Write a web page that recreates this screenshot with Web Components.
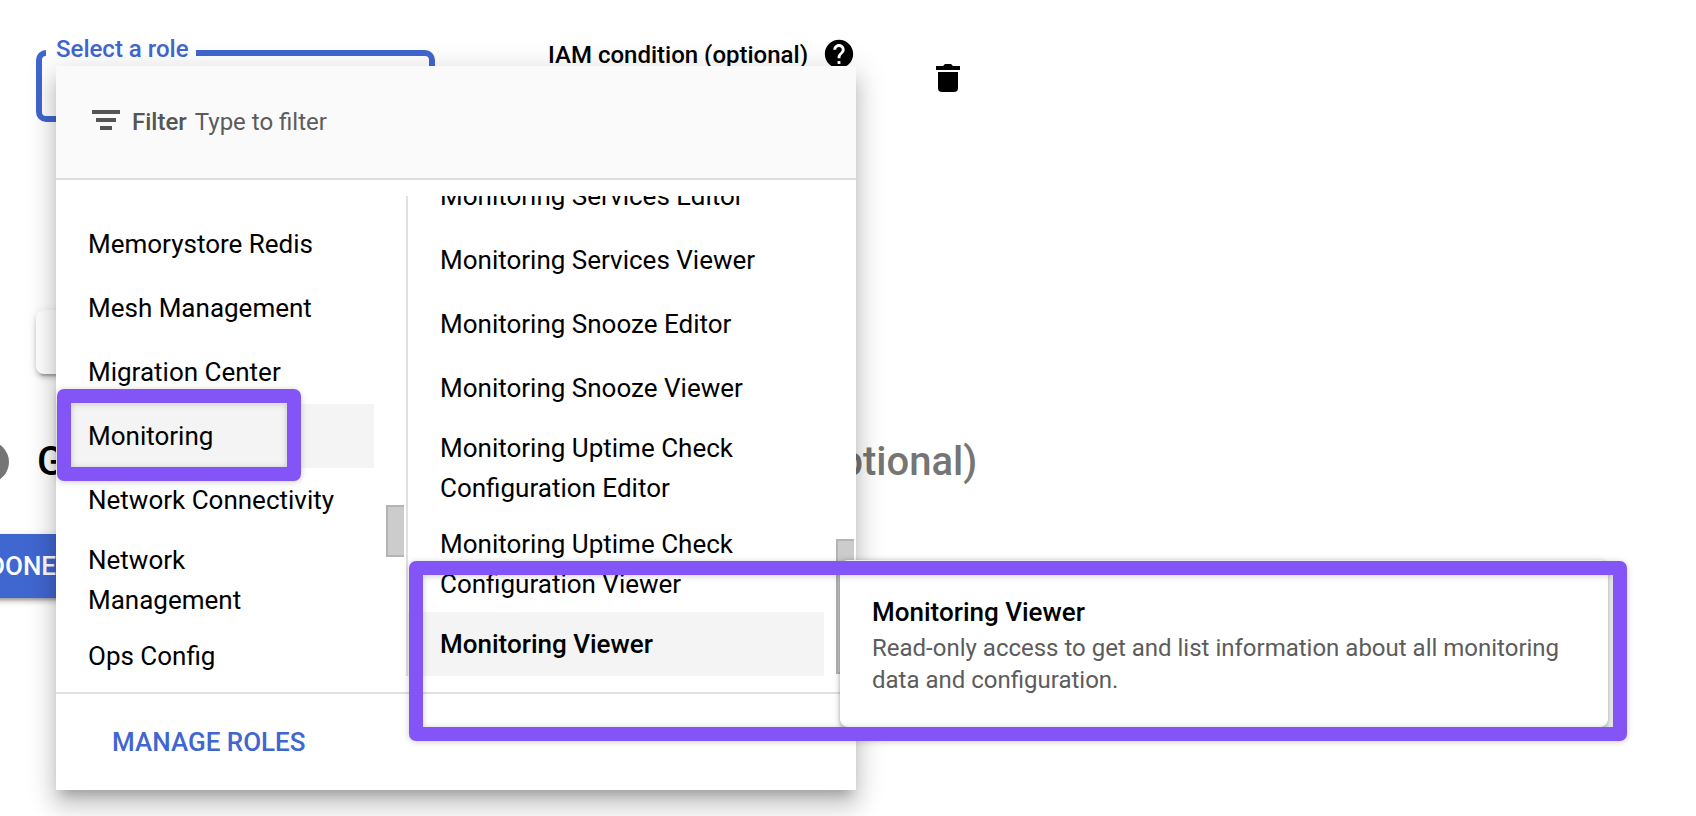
<!DOCTYPE html>
<html lang="en">
<head>
<meta charset="utf-8">
<title>Create service account</title>
<style>
  html, body { margin: 0; background: #fff; }
  body { font-family: Roboto, "Liberation Sans", sans-serif; font-size: 26px; color: #000; }
</style>
</head>
<body>
<service-account-page></service-account-page>

<script>
const define = (name, html, setup) => {
  const template = document.createElement('template');
  template.innerHTML = html;
  customElements.define(name, class extends HTMLElement {
    constructor() {
      super();
      this.attachShadow({ mode: 'open' }).append(template.content.cloneNode(true));
    }
    connectedCallback() { if (setup) setup.call(this, this.shadowRoot); }
  });
};

/* Outlined field with its label set in the top border */
define('role-field', `
  <style>
    :host { display: block; position: relative; width: 399px; height: 72px; flex: none; }
    input { box-sizing: border-box; width: 100%; height: 100%; border: 6px solid #4066d0; border-radius: 10px; background: #fff; outline: 0; font: inherit; padding: 0 16px; }
    label { position: absolute; top: -17px; left: 10px; padding: 0 7px 0 10px; background: #fff; color: #4066d0; font-size: 24px; line-height: 32px; font-weight: 500; white-space: nowrap; }
  </style>
  <input id="role" type="text" role="combobox" aria-expanded="true" aria-controls="roles">
  <label for="role">Select a role</label>
`);

define('condition-label', `
  <style>
    :host { display: flex; align-items: center; gap: 17px; font-size: 24px; line-height: 32px; font-weight: 500; white-space: nowrap; }
    svg { display: block; width: 34px; height: 34px; margin: -2px -3px 0; }
    button { padding: 0; border: 0; background: none; }
  </style>
  <span><slot></slot></span>
  <button type="button" aria-label="Help"><svg viewBox="0 0 24 24"><path d="M12 2C6.48 2 2 6.48 2 12s4.480 10 10 10 10-4.480 10-10S17.520 2 12 2zm1 17h-2v-2h2v2zm2.070-7.750l-.9.920C13.450 12.900 13 13.500 13 15h-2v-.5c0-1.100.45-2.100 1.170-2.830l1.240-1.260c.37-.36.59-.86.59-1.410 0-1.100-.9-2-2-2s-2 .9-2 2H8c0-2.210 1.790-4 4-4s4 1.790 4 4c0 .88-.36 1.680-.93 2.250z"/></svg></button>
`);

define('delete-button', `
  <style>
    :host { display: block; }
    button { display: block; padding: 0; border: 0; background: none; }
    svg { display: block; width: 24px; height: 28px; }
  </style>
  <button type="button" aria-label="Delete role"><svg viewBox="0 0 24 28"><path d="M0 2h7l2-2h6l2 2h7v4H0zM2 8h20v16a4 4 0 0 1-4 4H6a4 4 0 0 1-4-4z"/></svg></button>
`);

define('step-heading', `
  <style>
    :host { display: flex; align-items: center; gap: 28px; }
    i { width: 42px; height: 42px; border-radius: 50%; background: #757575; }
    h2 { margin: 0; font-size: 40px; line-height: 48px; font-weight: 500; white-space: nowrap; }
    span { color: #757575; }
  </style>
  <i></i>
  <h2><slot></slot> <span>(optional)</span></h2>
`);

define('raised-button', `
  <style>
    :host { display: block; }
    button { display: block; height: 64px; padding: 0 24px; border: 0; border-radius: 8px; background: #fff; font: 500 26px/64px Roboto, sans-serif; box-shadow: 0 6px 2px -4px rgba(0,0,0,.2), 0 4px 4px rgba(0,0,0,.14), 0 2px 10px rgba(0,0,0,.12); min-width: 300px; }
    :host([primary]) button { min-width: 0; border-radius: 4px; background: #4066d0; color: #fff; }
  </style>
  <button type="button"><slot></slot></button>
`, function (root) {
  if (this.hasAttribute('name')) root.querySelector('button').setAttribute('aria-label', this.getAttribute('name'));
});

define('role-option', `
  <style>
    :host { display: block; }
    button { box-sizing: border-box; display: block; width: 100%; min-height: 64px; padding: 8px 32px; border: 0; background: none; color: #000; font: inherit; line-height: 40px; text-align: left; }
    :host([short]) button { min-height: 56px; }
    :host([selected]) button { background: #f4f4f4; }
    :host([bold]) button { font-weight: 500; }
  </style>
  <button type="button"><slot></slot></button>
`);

/* Scrolling list column; the thumb takes its place from custom properties */
define('option-pane', `
  <style>
    :host { display: block; position: relative; box-sizing: border-box; height: 480px; overflow: hidden; padding-right: 32px; }
    .thumb { position: absolute; box-sizing: border-box; right: 2px; top: var(--thumb-top); height: var(--thumb-height); width: 18px; background: #ccc; border: 2px solid #b4b4b4; border-right: 0; }
  </style>
  <slot></slot>
  <div class="thumb"></div>
`);

define('filter-bar', `
  <style>
    :host { display: flex; align-items: center; box-sizing: border-box; height: 114px; padding: 0 36px; background: #fafafa; border-bottom: 2px solid #dcdcdc; color: #555; font-size: 24px; line-height: 32px; }
    svg { width: 28px; height: 20px; margin: -4px 12px 0 0; flex: none; }
    label { font-weight: 500; margin-right: 8px; }
    input { flex: 1; min-width: 0; padding: 0; border: 0; outline: 0; background: none; font: inherit; color: inherit; height: 32px; }
    input::placeholder { color: #5c5c5c; opacity: 1; }
  </style>
  <svg viewBox="0 0 28 20" fill="#555"><path d="M0 0h28v4H0zM4 8h20v4H4zM8 16h12v4H8z"/></svg>
  <label for="filter">Filter</label>
  <input id="filter" type="text" placeholder="Type to filter">
`);

define('role-menu', `
  <style>
    :host { display: block; background: #fff; box-shadow: 0 10px 10px -6px rgba(0,0,0,.2), 0 16px 20px 2px rgba(0,0,0,.14), 0 6px 28px 4px rgba(0,0,0,.12); }
    .panes { display: grid; grid-template-columns: 350px 1fr; padding: 16px 0; }
    .groups { --thumb-top: 309px; --thumb-height: 52px; padding-top: 16px; }
    .roles { --thumb-top: 343px; --thumb-height: 135px; border-left: 2px solid #e0e0e0; }
    .roles role-option:first-child { margin-top: -32px; }
    footer { display: flex; align-items: center; box-sizing: border-box; height: 98px; padding: 0 56px; border-top: 2px solid #e0e0e0; }
    footer button { padding: 0; border: 0; background: none; color: #4066d0; font: inherit; font-weight: 500; line-height: 40px; }
  </style>
  <filter-bar></filter-bar>
  <div class="panes" id="roles">
    <option-pane class="groups">
      <role-option>Memorystore Redis</role-option>
      <role-option>Mesh Management</role-option>
      <role-option>Migration Center</role-option>
      <role-option selected>Monitoring</role-option>
      <role-option>Network Connectivity</role-option>
      <role-option>Network Management</role-option>
      <role-option short>Ops Config</role-option>
    </option-pane>
    <option-pane class="roles">
      <role-option>Monitoring Services Editor</role-option>
      <role-option>Monitoring Services Viewer</role-option>
      <role-option>Monitoring Snooze Editor</role-option>
      <role-option>Monitoring Snooze Viewer</role-option>
      <role-option>Monitoring Uptime Check Configuration Editor</role-option>
      <role-option>Monitoring Uptime Check Configuration Viewer</role-option>
      <role-option selected bold>Monitoring Viewer</role-option>
    </option-pane>
  </div>
  <footer><button type="button">MANAGE ROLES</button></footer>
`);

define('role-tooltip', `
  <style>
    :host { display: block; box-sizing: border-box; padding: 32px 32px 30px; min-height: 167px; border-radius: 8px; background: #fff; box-shadow: 0 2px 4px rgba(0,0,0,.3), 0 2px 8px rgba(0,0,0,.12); }
    h3 { margin: 0; font-size: 26px; line-height: 40px; font-weight: 500; }
    p { margin: 0; font-size: 24px; line-height: 32px; color: #5c5c5c; }
  </style>
  <h3><slot name="title"></slot></h3>
  <p><slot></slot></p>
`);

define('highlight-frame', `
  <style>
    :host { display: block; box-sizing: border-box; pointer-events: none; filter: drop-shadow(0 1px 3px rgba(0,0,0,.2)); }
    div { box-sizing: border-box; height: 100%; border: 14px solid #8455f6; border-radius: 7px; }
  </style>
  <div></div>
`);

define('service-account-page', `
  <style>
    :host { display: block; position: relative; min-height: 100vh; overflow: hidden; }
    main { display: flex; flex-direction: column; align-items: flex-start; padding: 50px 36px 0; }
    .role { display: flex; align-items: flex-start; }
    condition-label { margin: -11px 83px 0 113px; }
    delete-button { margin-top: 14px; }
    .add { margin: 188px 0 64px; }
    step-heading { margin-left: -69px; }
    .done { margin: 48px 0 0 -72px; }
    role-menu { position: absolute; left: 56px; top: 66px; width: 800px; }
    role-tooltip { position: absolute; left: 840px; top: 560px; width: 768px; }
    .group-frame { position: absolute; left: 57px; top: 389px; width: 244px; height: 92px; }
    .role-frame { position: absolute; left: 409px; top: 561px; width: 1218px; height: 180px; }
  </style>
  <main>
    <div class="role">
      <role-field></role-field>
      <condition-label>IAM condition (optional)</condition-label>
      <delete-button></delete-button>
    </div>
    <raised-button class="add" name="Add another role"></raised-button>
    <step-heading>Grant users access to this service account</step-heading>
    <raised-button class="done" primary>DONE</raised-button>
  </main>
  <role-menu></role-menu>
  <role-tooltip><span slot="title">Monitoring Viewer</span>Read-only access to get and list information about all monitoring data and configuration.</role-tooltip>
  <highlight-frame class="group-frame"></highlight-frame>
  <highlight-frame class="role-frame"></highlight-frame>
`);
</script>
</body>
</html>
